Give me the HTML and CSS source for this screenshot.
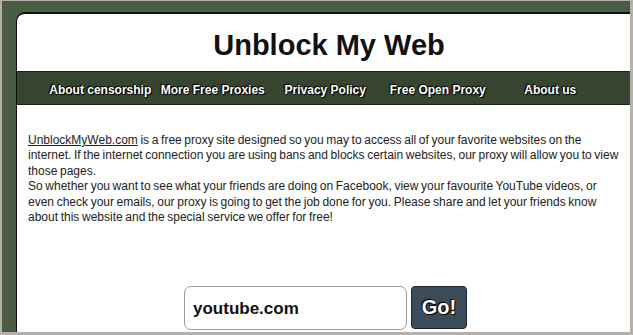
FILE: index.html
```html
<!DOCTYPE html>
<html>
<head>
<meta charset="utf-8">
<title>Unblock My Web</title>
<link rel="stylesheet" href="styles.css">
</head>
<body>
<div class="frame">
  <div class="card">
    <header class="header">
      <h1 class="title">Unblock My Web</h1>
    </header>
    <nav class="nav">
      <a class="nav-item" href="#">About censorship</a>
      <a class="nav-item" href="#">More Free Proxies</a>
      <a class="nav-item" href="#">Privacy Policy</a>
      <a class="nav-item" href="#">Free Open Proxy</a>
      <a class="nav-item" href="#">About us</a>
    </nav>
    <main class="content">
      <p class="intro"><a class="site-link" href="#">UnblockMyWeb.com</a> is a free proxy site designed so you may to access all of your favorite websites on the<br>internet. If the internet connection you are using bans and blocks certain websites, our proxy will allow you to view<br>those pages.<br>So whether you want to see what your friends are doing on Facebook, view your favourite YouTube videos, or<br>even check your emails, our proxy is going to get the job done for you. Please share and let your friends know<br>about this website and the special service we offer for free!</p>
      <form class="search">
        <input class="url-input" type="text" value="youtube.com">
        <button class="go" type="button">Go!</button>
      </form>
    </main>
  </div>
</div>
</body>
</html>
```
FILE: styles.css
```css
html, body {
  margin: 0;
  padding: 0;
}
body {
  background: #b5b0ac;
  height: 335px;
  overflow: hidden;
  font-family: "Liberation Sans", Arial, sans-serif;
}
.frame {
  margin: 1px 3px 0 2px;
  height: 331px;
  background: #4a5d44;
  overflow: hidden;
  padding: 11px 0 0 14px;
  box-sizing: border-box;
}
.card {
  width: 626px;
  min-width: 626px;
  background: #ffffff;
  border: 1px solid #111;
  border-top-width: 2px;
  border-radius: 9px 9px 0 0;
  box-sizing: border-box;
  height: 400px;
}
.header {
  height: 57px;
  box-sizing: border-box;
  padding-top: 17px;
  text-align: center;
}
.title {
  margin: 0;
  font-size: 29px;
  line-height: 1;
  font-weight: bold;
  color: #111;
}
.nav {
  display: flex;
  height: 34px;
  box-sizing: border-box;
  background: #364430;
  border-top: 1px solid #1b2218;
  border-bottom: 1px solid #1b2218;
  padding: 4px 0 0 27px;
}
.nav-item {
  width: 112.5px;
  flex: none;
  text-align: center;
  line-height: 28px;
  font-size: 12px;
  font-weight: bold;
  color: #fff;
  text-decoration: none;
  white-space: nowrap;
  text-shadow: 0 0 1px #000, 1px 1px 1px #000, -1px -1px 1px #000;
}
.content {
  padding: 28px 8px 0 11px;
}
.intro {
  margin: 0;
  font-size: 12px;
  line-height: 15.4px;
  word-spacing: -0.7px;
  color: #222;
  white-space: nowrap;
}
.site-link {
  color: #222;
  text-decoration: underline;
}
.search {
  display: flex;
  gap: 4px;
  margin: 61px 0 0 0;
  padding-left: 156px;
  align-items: flex-start;
}
.url-input {
  width: 223px;
  height: 44px;
  box-sizing: border-box;
  border: 1px solid #9a9a9a;
  border-radius: 7px;
  padding: 2px 0 0 8px;
  font-family: "Liberation Sans", Arial, sans-serif;
  font-size: 17px;
  font-weight: bold;
  color: #111;
  background: #fff;
  outline: none;
}
.go {
  width: 56px;
  height: 43px;
  box-sizing: border-box;
  background: #3d4c5b;
  border: 1px solid #1c232b;
  border-radius: 4px;
  color: #fff;
  font-family: "Liberation Sans", Arial, sans-serif;
  font-size: 20px;
  font-weight: bold;
  padding: 0;
  text-shadow: 0 0 1px #000, 1px 1px 1px #000, -1px -1px 1px #000;
}
```
